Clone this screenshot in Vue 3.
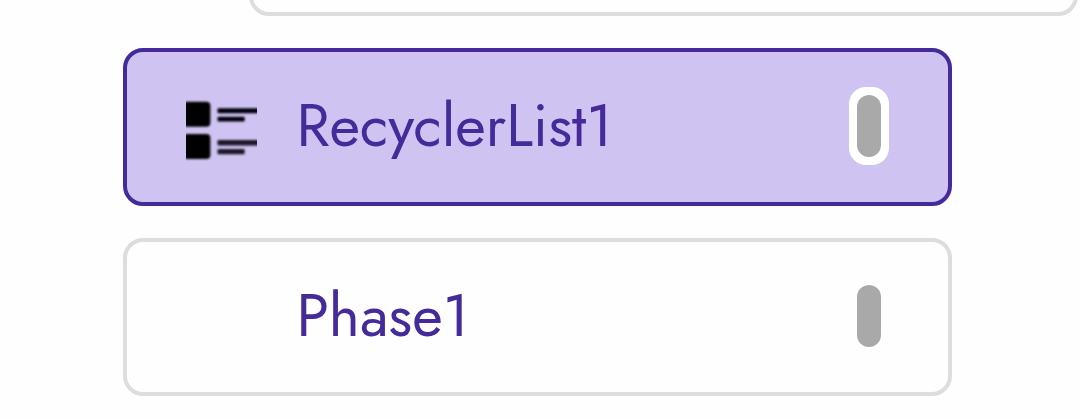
<script setup>
import { ref } from 'vue'

const selected = ref('recycler')

const items = ref([
  { id: 'parent', label: '', icon: '', nested: true },
  { id: 'recycler', label: 'RecyclerList1', icon: 'list' },
  { id: 'phase', label: 'Phase1', icon: '' }
])
</script>

<template>
  <div class="screen">
    <div class="list">
      <div
        v-for="item in items"
        :key="item.id"
        class="card"
        :class="{ nested: item.nested, selected: item.id === selected }"
        @click="selected = item.id"
      >
        <div class="icon">
          <svg v-if="item.icon === 'list'" width="71" height="64" viewBox="0 0 71 64">
            <defs>
              <filter id="soft" x="-20%" y="-20%" width="140%" height="140%">
                <feGaussianBlur stdDeviation="1.2" />
              </filter>
            </defs>
            <g filter="url(#soft)">
              <rect x="-3" y="2.7" width="27.4" height="25" rx="4" />
              <rect x="-3" y="35" width="27.4" height="25" rx="4" />
              <g fill="#06040a">
                <rect x="31.5" y="9.2" width="43" height="5" rx="1" />
                <rect x="31.5" y="17.8" width="27.2" height="4.8" rx="1" />
              </g>
              <g fill="#1c1726">
                <rect x="31.5" y="41" width="43" height="5.4" rx="1" />
                <rect x="31.5" y="49.9" width="27.2" height="5.4" rx="1" />
              </g>
            </g>
          </svg>
        </div>
        <span class="label">{{ item.label }}</span>
        <div class="handle"><span></span></div>
      </div>
    </div>
  </div>
</template>

<style scoped>
.screen {
  height: 419px;
  overflow: hidden;
  background: #fefefe;
  display: flex;
  align-items: flex-start;
}

.list {
  display: flex;
  flex-direction: column;
  gap: 32px;
  margin-top: -142.5px;
  padding-left: 123px;
}

.card {
  box-sizing: border-box;
  width: 829px;
  height: 158px;
  border: 4px solid #ddd;
  border-radius: 20px;
  background: #fefefe;
  display: flex;
  align-items: center;
  padding: 0 59px;
  cursor: pointer;
}

.card.nested {
  margin-left: 126px;
}

.card.selected {
  border-color: #452a9a;
  background: #cfc4f1;
}

.icon {
  width: 71px;
  height: 64px;
  margin-top: 9px;
}

.icon svg {
  display: block;
}

.label {
  margin-left: 39.4px;
  margin-bottom: 1px;
  font-family: Jost, Lato, sans-serif;
  font-size: 59.2px;
  line-height: 86px;
  color: #452a9a;
}

.handle {
  margin-left: auto;
  margin-bottom: 1px;
  padding: 8px;
  border-radius: 17px;
}

.selected .handle {
  background: #fff;
}

.handle span {
  display: block;
  width: 24px;
  height: 62px;
  border-radius: 12px;
  background: #a9a9a9;
}
</style>

<style>
body {
  margin: 0;
  overflow: hidden;
}
</style>
